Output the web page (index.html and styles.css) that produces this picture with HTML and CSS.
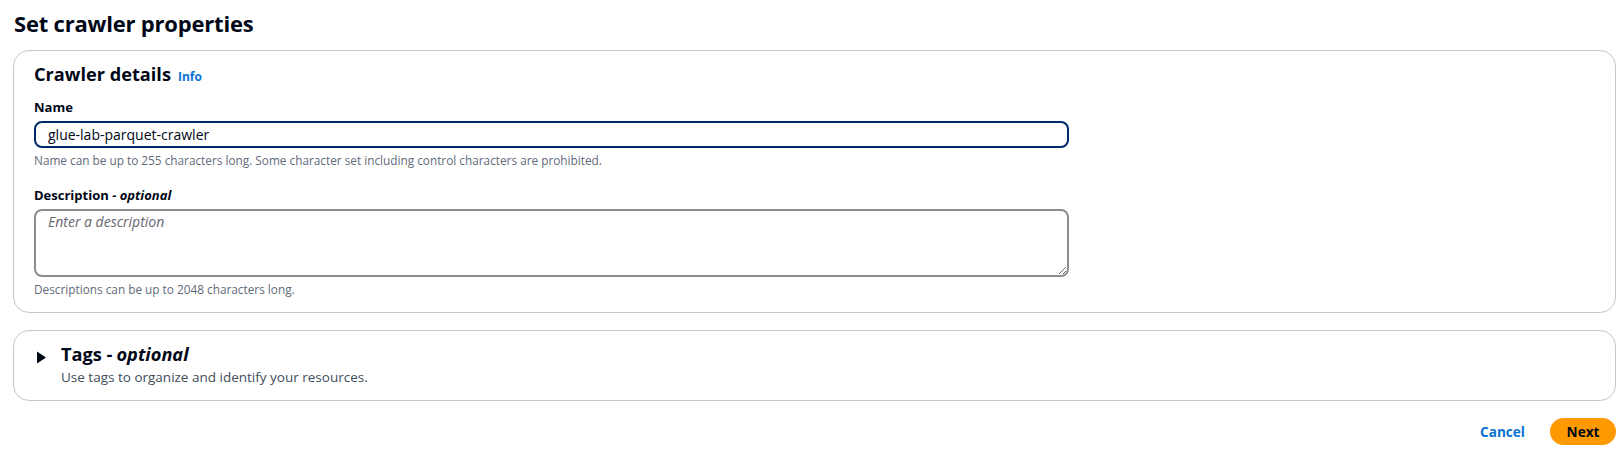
FILE: index.html
```html
<!DOCTYPE html>
<html lang="en">
<head>
<meta charset="utf-8">
<title>Set crawler properties</title>
<link rel="stylesheet" href="styles.css">
</head>
<body>
<main class="page">
  <h1 class="page-title">Set crawler properties</h1>

  <section class="card details">
    <h2 class="card-title">Crawler details <a class="info" href="#">Info</a></h2>

    <div class="field">
      <label class="label" for="name">Name</label>
      <input class="input" id="name" type="text" value="glue-lab-parquet-crawler" autofocus>
      <p class="hint">Name can be up to 255 characters long. Some character set including control characters are prohibited.</p>
    </div>

    <div class="field field-desc">
      <label class="label" for="desc">Description - <i>optional</i></label>
      <textarea class="textarea" id="desc" placeholder="Enter a description"></textarea>
      <p class="hint">Descriptions can be up to 2048 characters long.</p>
    </div>
  </section>

  <section class="card tags">
    <div class="tags-head">
      <svg class="caret" width="10" height="13" viewBox="0 0 10 13" aria-hidden="true"><path d="M0 0.5 L9 6.5 L0 12.5 Z" fill="#000716"/></svg>
      <div class="tags-text">
        <h2 class="card-title">Tags - <i>optional</i></h2>
        <p class="tags-desc">Use tags to organize and identify your resources.</p>
      </div>
    </div>
  </section>

  <div class="actions">
    <button class="btn btn-link" type="button">Cancel</button>
    <button class="btn btn-primary" type="button">Next</button>
  </div>
</main>
</body>
</html>
```

FILE: styles.css
```css
* { box-sizing: border-box; }

html, body {
  margin: 0;
  padding: 0;
  background: #ffffff;
}

body {
  font-family: "Open Sans", "Noto Sans", Arial, sans-serif;
  color: #000716;
  width: 1617px;
  height: 451px;
  overflow: hidden;
}

.page {
  padding: 8px 1px 0 13px;
  display: flex;
  flex-direction: column;
}

.page-title {
  margin: 0 0 12px 1px;
  font-size: 22px;
  line-height: 30px;
  font-weight: 700;
  letter-spacing: -0.2px;
}

.card {
  border: 1px solid #c6c6cd;
  border-radius: 16px;
  background: #fff;
}

.details {
  height: 263px;
  padding: 12px 20px 0 20px;
}

.card-title {
  margin: 0;
  font-size: 18.2px;
  line-height: 22px;
  font-weight: 700;
  display: flex;
  align-items: baseline;
  gap: 0 5px;
}

.card-title i {
  font-style: italic;
  margin-left: -1px;
}

.info {
  font-size: 12px;
  font-weight: 700;
  color: #0972d3;
  text-decoration: none;
  margin-left: 2px;
}

.field {
  display: flex;
  flex-direction: column;
  margin-top: 8px;
}

.field-desc {
  margin-top: 16px;
}

.label {
  font-size: 13px;
  line-height: 22px;
  font-weight: 700;
  margin-bottom: 3px;
}

.label i {
  font-style: italic;
}

.input,
.textarea {
  width: 1035px;
  font-family: inherit;
  font-size: 14px;
  color: #000716;
  border-radius: 8px;
  background: #fff;
  outline: none;
  margin: 0;
}

.input {
  height: 27px;
  border: 2px solid #002a6b;
  padding: 0 12px;
  caret-color: #000716;
}

.textarea {
  height: 68px;
  border: 2px solid #8c8c94;
  padding: 1px 12px;
  resize: vertical;
  line-height: 20px;
  display: block;
}

.textarea::placeholder {
  color: #656871;
  font-style: italic;
  opacity: 1;
}

.hint {
  margin: 4px 0 0 0;
  font-size: 11.8px;
  line-height: 16px;
  color: #5f6b7a;
}

.tags {
  margin-top: 17px;
  height: 71px;
  padding: 12px 20px 0 23px;
}

.tags-head {
  display: flex;
  align-items: flex-start;
  gap: 0 14px;
}

.caret {
  width: 10px;
  height: 13px;
  margin-top: 8px;
  flex: none;
}

.tags-text {
  display: flex;
  flex-direction: column;
}

.tags-desc {
  margin: 3px 0 0 0;
  font-size: 13.5px;
  line-height: 18px;
  color: #414d5c;
}

.actions {
  margin-top: 17px;
  display: flex;
  justify-content: flex-end;
  align-items: center;
  gap: 3px;
}

.btn {
  font-family: inherit;
  font-size: 13.6px;
  font-weight: 700;
  border-radius: 20px;
  height: 27px;
  padding: 0 20px;
  cursor: pointer;
  line-height: 23px;
}

.btn-link {
  background: transparent;
  border: 2px solid transparent;
  color: #0972d3;
}

.btn-primary {
  background: #ff9900;
  border: 2px solid #ff9900;
  color: #000716;
  width: 66px;
  padding: 0;
}
```
